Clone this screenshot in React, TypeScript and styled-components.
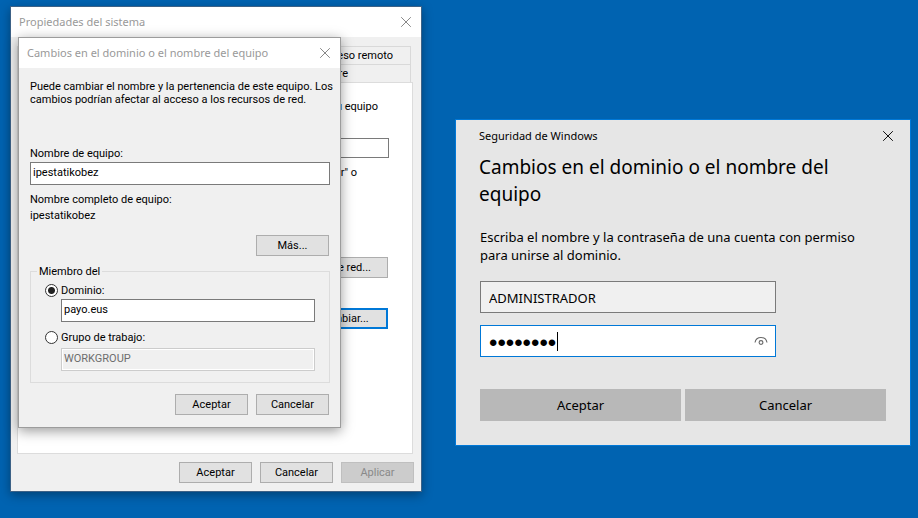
import React from 'react';
import styled, { createGlobalStyle } from 'styled-components';

const dialogFont = 'Roboto, "Liberation Sans", Arial, sans-serif';
const uiFont = '"Noto Sans", "Open Sans", sans-serif';

const GlobalStyle = createGlobalStyle`
  * { box-sizing: border-box; }
  body { margin: 0; background: #0063b1; }
  button, input { margin: 0; font: inherit; color: inherit; border-radius: 0; }
  p, h1, h2 { margin: 0; font-weight: 400; }
  input:focus, button:focus { outline: none; }
`;

const Desktop = styled.main`
  display: grid;
  grid-template-columns: minmax(0, 412fr) minmax(0, 456fr);
  align-items: start;
  gap: 33px;
  min-height: 100vh;
  padding: 6px 7px 26px 10px;
  background: #0063b1;
`;

const PropertiesWindow = styled.section`
  position: relative;
  border: 1px solid #3c6186;
  background: #f0f0f0;
  box-shadow: 0 3px 10px rgba(0, 0, 0, 0.35);
  font: 11px/13px ${dialogFont};
  color: #000;
`;

const DomainDialog = styled.section`
  position: absolute;
  top: 30px;
  left: 7px;
  right: 80px;
  border: 1px solid #9c9c9c;
  background: #f0f0f0;
  box-shadow: 0 3px 12px rgba(0, 0, 0, 0.4);
`;

const TitleBar = styled.header`
  display: flex;
  align-items: center;
  justify-content: space-between;
  height: 30px;
  padding: 0 9px 0 8px;
  background: #fff;
  color: #999;
  font: 11px/16px ${uiFont};
`;

const WindowTitle = styled.h2`
  font: inherit;
`;

const CloseButton = styled.button`
  display: flex;
  padding: 0;
  border: 0;
  background: transparent;
`;

const PropertiesBody = styled.div`
  padding: 9px 8px 8px 6px;
`;

const TabRow = styled.div`
  display: flex;
  height: 18px;
  margin-right: 2px;
`;

const Tab = styled.button<{ $grow?: number; $inset?: number }>`
  flex: ${(p) => p.$grow ?? 1} 1 0;
  padding: 0 ${(p) => p.$inset ?? 17}px 0 0;
  border: 1px solid #d9d9d9;
  border-bottom: 0;
  background: #f0f0f0;
  text-align: right;
`;

const TabPane = styled.div`
  display: flex;
  flex-direction: column;
  align-items: flex-end;
  padding: 17px 24px 124px 12px;
  border: 1px solid #dcdcdc;
  background: #fff;
`;

const PaneText = styled.p<{ $inset: number; $gap?: number }>`
  margin: ${(p) => p.$gap ?? 0}px ${(p) => p.$inset}px 0 0;
`;

const DescriptionInput = styled.input`
  width: 270px;
  height: 20px;
  margin: 25px -1px 0 0;
  padding: 0 3px;
  border: 1px solid #7a7a7a;
  background: #fff;
`;

const PushButton = styled.button<{ $wide?: boolean; $focused?: boolean; $gap?: number }>`
  width: ${(p) => (p.$wide ? 88 : 73)}px;
  height: 21px;
  margin-top: ${(p) => p.$gap ?? 0}px;
  padding: 0;
  border: ${(p) => (p.$focused ? '2px solid #0078d7' : '1px solid #adadad')};
  background: #e1e1e1;
  &:disabled {
    border-color: #bfbfbf;
    background: #ccc;
    color: #898989;
  }
`;

const ButtonRow = styled.div<{ $gap: number }>`
  display: flex;
  justify-content: flex-end;
  gap: 8px;
  margin-top: ${(p) => p.$gap}px;
`;

const FooterRow = styled(ButtonRow)`
  margin-right: -1px;
`;

const DialogBody = styled.form`
  padding: 12px 10px 12px 11px;
`;

const Explanation = styled.p`
  margin-right: -8px;
`;

const FieldLabel = styled.label`
  display: block;
  margin: 41px 0 2px;
`;

const FullName = styled.p`
  display: flex;
  flex-direction: column;
  gap: 3px;
  margin-top: 8px;
`;

const TextInput = styled.input`
  display: block;
  width: 100%;
  height: 23px;
  padding: 0 2px 3px;
  border: 1px solid #7a7a7a;
  background: #fff;
  &:disabled {
    border-color: #ccc;
    background: #f0f0f0;
    box-shadow: inset 0 0 0 1px #fff;
    color: #6d6d6d;
  }
`;

const InsetButtonRow = styled(ButtonRow)`
  margin-right: 1px;
`;

const MemberGroup = styled.fieldset`
  min-width: 0;
  margin: 9px 0 0;
  padding: 6px 14px 11px 6px;
  border: 1px solid #dcdcdc;
`;

const Legend = styled.legend`
  padding: 0 2px;
`;

const Choice = styled.div<{ $before?: number; $after: number }>`
  display: flex;
  align-items: center;
  gap: 3px;
  height: 13px;
  margin: ${(p) => p.$before ?? 0}px 0 ${(p) => p.$after}px 8px;
`;

const Radio = styled.input`
  appearance: none;
  width: 13px;
  height: 13px;
  border: 1px solid #333;
  border-radius: 50%;
  background: #fff;
  &:checked {
    background: radial-gradient(circle, #222 3px, #fff 4px);
  }
`;

const ChoiceField = styled.div`
  margin-left: 24px;
`;

const SecurityWindow = styled.section`
  margin-top: 113px;
  padding: 7px 24px 24px 23px;
  border: 1px solid #0078d7;
  background: #e6e6e6;
  color: #000;
  font: 13px/18px ${uiFont};
`;

const SecurityBar = styled.header`
  display: flex;
  align-items: center;
  justify-content: space-between;
  height: 18px;
  margin-right: -8px;
  font-size: 11px;
`;

const Heading = styled.h1`
  max-width: 400px;
  margin-top: 9px;
  font-size: 19px;
  line-height: 27px;
`;

const SecurityForm = styled.form`
  padding-left: 1px;
`;

const Message = styled.p`
  max-width: 400px;
  margin-top: 20px;
`;

const Credentials = styled.div`
  display: grid;
  grid-template-columns: minmax(0, 1fr);
  gap: 12px;
  margin: 17px 110px 32px 0;
`;

const Credential = styled.input`
  width: 100%;
  height: 32px;
  padding: 2px 8px 0;
  border: 1px solid #7a7a7a;
  background: #f0f0f0;
`;

const PasswordBox = styled.div`
  position: relative;
  display: flex;
  align-items: center;
  height: 32px;
  padding: 0 7px 0 8px;
  border: 1px solid #0078d7;
  background: #fff;
`;

const Password = styled.input`
  flex: 1;
  min-width: 0;
  height: 30px;
  padding: 4px 0 0;
  border: 0;
  background: transparent;
  font: 24px/26px "Liberation Sans", Arial, sans-serif;
  caret-color: transparent;
`;

const Caret = styled.span`
  position: absolute;
  left: 76px;
  top: 6px;
  width: 1px;
  height: 19px;
  background: #000;
`;

const WideButtons = styled.div`
  display: grid;
  grid-template-columns: 1fr 1fr;
  gap: 4px;
`;

const WideButton = styled.button`
  height: 32px;
  padding: 0;
  border: 0;
  background: #b8b8b8;
`;

function CloseIcon({ color }: { color: string }) {
  return (
    <svg width="12" height="12" viewBox="0 0 12 12" fill="none" stroke={color} strokeWidth="1">
      <path d="M1.2 1.2 10.8 10.8M10.8 1.2 1.2 10.8" />
    </svg>
  );
}

function EyeIcon() {
  return (
    <svg width="14" height="10" viewBox="0 0 14 10" fill="none" stroke="#666" strokeWidth="1.1">
      <path d="M1 6.5C1.6 3.3 4 1.5 7 1.5S12.4 3.3 13 6.5" />
      <circle cx="7" cy="6.5" r="1.9" />
    </svg>
  );
}

export default function App() {
  return (
    <>
      <GlobalStyle />
      <Desktop>
        <PropertiesWindow>
          <TitleBar>
            <WindowTitle>Propiedades del sistema</WindowTitle>
            <CloseButton type="button" aria-label="Cerrar propiedades">
              <CloseIcon color="#888" />
            </CloseButton>
          </TitleBar>
          <PropertiesBody>
            <TabRow>
              <Tab type="button">Acceso remoto</Tab>
            </TabRow>
            <TabRow>
              <Tab type="button" $grow={2} aria-label="Nombre de equipo" />
              <Tab type="button" $grow={3} $inset={62}>Hardware</Tab>
            </TabRow>
            <TabPane>
              <PaneText $inset={10}>su equipo</PaneText>
              <DescriptionInput aria-label="Descripción del equipo" />
              <PaneText $inset={31} $gap={8}>"Cambiar" o</PaneText>
              <PushButton type="button" $wide $gap={78}>Id. de red...</PushButton>
              <PushButton type="button" $wide $focused $gap={30}>Cambiar...</PushButton>
            </TabPane>
            <FooterRow $gap={8}>
              <PushButton type="button">Aceptar</PushButton>
              <PushButton type="button">Cancelar</PushButton>
              <PushButton type="button" disabled>Aplicar</PushButton>
            </FooterRow>
          </PropertiesBody>

          <DomainDialog role="dialog">
            <TitleBar>
              <WindowTitle>Cambios en el dominio o el nombre del equipo</WindowTitle>
              <CloseButton type="button" aria-label="Cerrar cambios">
                <CloseIcon color="#888" />
              </CloseButton>
            </TitleBar>
            <DialogBody>
              <Explanation>
                Puede cambiar el nombre y la pertenencia de este equipo. Los cambios podrían afectar
                al acceso a los recursos de red.
              </Explanation>
              <FieldLabel htmlFor="computer">Nombre de equipo:</FieldLabel>
              <TextInput id="computer" defaultValue="ipestatikobez" />
              <FullName>
                <span>Nombre completo de equipo:</span>
                <span>ipestatikobez</span>
              </FullName>
              <InsetButtonRow $gap={13}>
                <PushButton type="button">Más...</PushButton>
              </InsetButtonRow>
              <MemberGroup>
                <Legend>Miembro del</Legend>
                <Choice $after={2}>
                  <Radio type="radio" name="member" id="domain" defaultChecked />
                  <label htmlFor="domain">Dominio:</label>
                </Choice>
                <ChoiceField>
                  <TextInput aria-label="Dominio" defaultValue="payo.eus" />
                </ChoiceField>
                <Choice $before={9} $after={4}>
                  <Radio type="radio" name="member" id="workgroup" />
                  <label htmlFor="workgroup">Grupo de trabajo:</label>
                </Choice>
                <ChoiceField>
                  <TextInput aria-label="Grupo de trabajo" defaultValue="WORKGROUP" disabled />
                </ChoiceField>
              </MemberGroup>
              <InsetButtonRow $gap={11}>
                <PushButton type="button">Aceptar</PushButton>
                <PushButton type="button">Cancelar</PushButton>
              </InsetButtonRow>
            </DialogBody>
          </DomainDialog>
        </PropertiesWindow>

        <SecurityWindow>
          <SecurityBar>
            <span>Seguridad de Windows</span>
            <CloseButton type="button" aria-label="Cerrar">
              <CloseIcon color="#111" />
            </CloseButton>
          </SecurityBar>
          <Heading>Cambios en el dominio o el nombre del equipo</Heading>
          <SecurityForm>
            <Message>
              Escriba el nombre y la contraseña de una cuenta con permiso para unirse al dominio.
            </Message>
            <Credentials>
              <Credential aria-label="Nombre de usuario" defaultValue="ADMINISTRADOR" />
              <PasswordBox>
                <Password type="password" aria-label="Contraseña" defaultValue="password" />
                <Caret />
                <CloseButton type="button" aria-label="Mostrar contraseña">
                  <EyeIcon />
                </CloseButton>
              </PasswordBox>
            </Credentials>
            <WideButtons>
              <WideButton type="button">Aceptar</WideButton>
              <WideButton type="button">Cancelar</WideButton>
            </WideButtons>
          </SecurityForm>
        </SecurityWindow>
      </Desktop>
    </>
  );
}
